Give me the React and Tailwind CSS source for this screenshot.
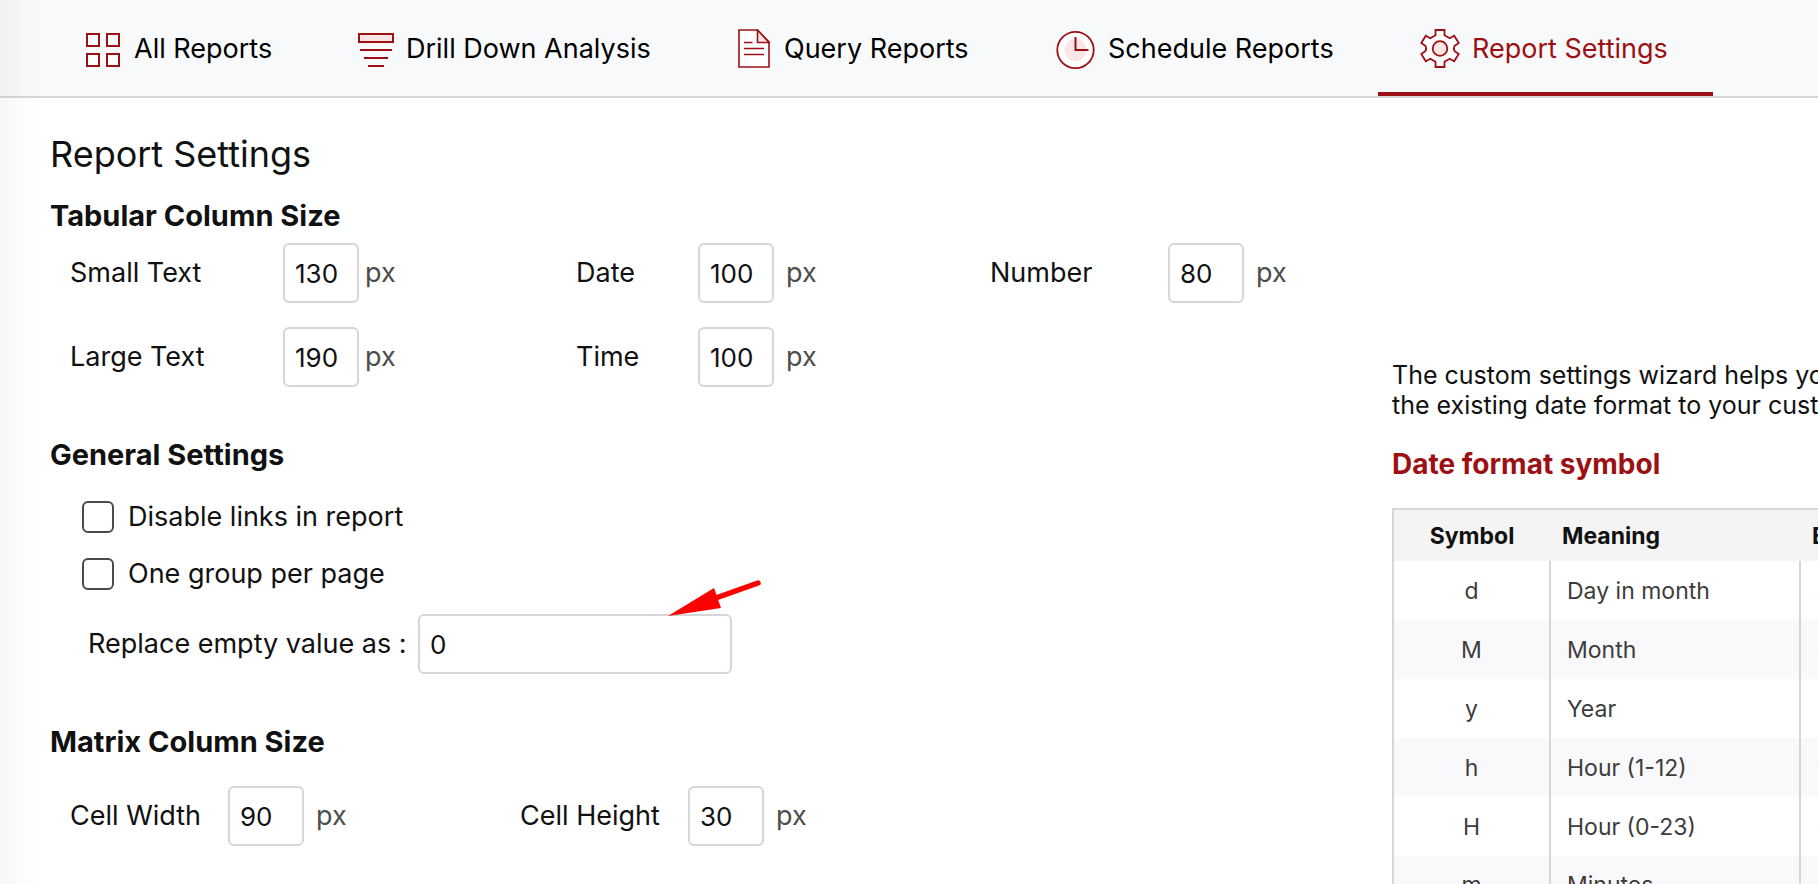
import React from "react";

const GridIcon = () => (
  <svg width="36" height="36" viewBox="0 -2 36 36" fill="#fff" stroke="#9c1014" strokeWidth="2" aria-hidden="true">
    <rect x="1" y="1" width="12" height="12" />
    <rect x="21" y="1" width="12" height="12" />
    <rect x="1" y="21" width="12" height="12" />
    <rect x="21" y="21" width="12" height="12" />
  </svg>
);

const FunnelIcon = () => (
  <svg width="36" height="36" viewBox="0 -2 36 36" fill="none" stroke="#9c1014" strokeWidth="2" aria-hidden="true">
    <rect x="1" y="1" width="34" height="8" fill="#fbe6e6" />
    <path d="M2 17h32M6 25h24M10 33h16" />
  </svg>
);

const DocumentIcon = () => (
  <svg width="34" height="40" viewBox="0 1 34 40" fill="none" stroke="#9c1014" strokeWidth="1.6" aria-hidden="true">
    <path d="M1 2H19.5L31 14V39H1Z" fill="#fff" />
    <path d="M19.5 2V14.5H31Z" fill="#fbe6e6" />
    <path d="M6 14.5h8.500M6 20.500h20M6 26.500h20" />
  </svg>
);

const ClockIcon = () => (
  <svg width="40" height="42" viewBox="0 -2 40 42" fill="none" stroke="#9c1014" aria-hidden="true">
    <circle cx="19.500" cy="20" r="18.200" fill="#fff" strokeWidth="1.800" />
    <circle cx="19.500" cy="20" r="11" fill="#fbe6e6" stroke="none" />
    <path d="M19.500 7V20H32.500" strokeWidth="2" />
  </svg>
);

const GearIcon = () => (
  <svg width="40" height="40" viewBox="0 1 40 40" fill="none" stroke="#9c1014" strokeWidth="1.800" aria-hidden="true">
    <path
      d="M15.500 2h9v5.300l5.200 3 4.500-2.600 4.500 7.300-4.300 3q-1 2.500 0 5l4.300 3-4.500 7.300-4.500-2.600-5.200 3v5.300h-9v-5.300l-5.200-3-4.500 2.600L1.300 26l4.300-3q1-2.500 0-5L1.300 15l4.500-7.300 4.500 2.600 5.200-3Z"
      fill="#fff"
    />
    <circle cx="20" cy="20.500" r="7.300" fill="#fbe6e6" />
  </svg>
);

const tabs = [
  { label: "All Reports", Icon: GridIcon },
  { label: "Drill Down Analysis", Icon: FunnelIcon },
  { label: "Query Reports", Icon: DocumentIcon },
  { label: "Schedule Reports", Icon: ClockIcon },
  { label: "Report Settings", Icon: GearIcon, active: true },
];

const symbols = [
  ["d", "Day in month", "4"],
  ["M", "Month", "07"],
  ["y", "Year", "2005"],
  ["h", "Hour (1-12)", "12"],
  ["H", "Hour (0-23)", "0"],
  ["m", "Minutes", "30"],
];

function SizeField({ id, label, value, labelClass, gapClass = "gap-3" }) {
  return (
    <div className="flex items-center">
      <label htmlFor={id} className={labelClass}>{label}</label>
      <div className={"flex items-center " + gapClass}>
        <input
          id={id}
          type="text"
          defaultValue={value}
          className="h-[60px] w-[76px] rounded-md border-2 border-[#d6d6d6] bg-white px-2.5 text-[26px]"
        />
        <span className="text-[#4d4d4d]">px</span>
      </div>
    </div>
  );
}

export default function App() {
  return (
    <div className="relative h-screen overflow-hidden bg-white font-['Inter',sans-serif] text-[27px] leading-9 text-[#111]">
      <header className="border-b-2 border-[#d6d6d6] bg-[#f8f9fb]">
        <nav className="grid h-24 grid-cols-[272px_380px_318px_364px_335px] pl-11">
          {tabs.map(({ label, Icon, active }) => (
            <a
              key={label}
              href="#"
              className={
                active
                  ? "flex items-center gap-3 border-b-4 border-[#9c1014] pl-[42px] pt-1.5 whitespace-nowrap text-[#9c1014]"
                  : "flex items-center gap-3 border-b-4 border-transparent pl-[42px] pt-1.5 whitespace-nowrap text-black"
              }
            >
              <Icon />
              <span>{label}</span>
            </a>
          ))}
        </nav>
      </header>

      <main className="grid grid-cols-[minmax(0,1fr)_426px]">
        <section className="pt-9 pl-[50px]">
          <h1 className="text-[36px] leading-10">Report Settings</h1>

          <h2 className="mt-6 text-[29px] font-bold">Tabular Column Size</h2>
          <div className="mt-[9px] grid grid-cols-[506px_414px_auto] gap-y-6 pl-5">
            <SizeField id="small" label="Small Text" value="130" labelClass="w-[213px]" gapClass="gap-1.5" />
            <SizeField id="date" label="Date" value="100" labelClass="w-[122px]" />
            <SizeField id="number" label="Number" value="80" labelClass="w-[178px]" />
            <SizeField id="large" label="Large Text" value="190" labelClass="w-[213px]" gapClass="gap-1.5" />
            <SizeField id="time" label="Time" value="100" labelClass="w-[122px]" />
          </div>

          <h2 className="mt-[50px] text-[29px] font-bold">General Settings</h2>
          <div className="mt-7 flex flex-col items-start gap-[25px] pl-8">
            {["Disable links in report", "One group per page"].map((text) => (
              <label key={text} className="flex h-8 items-center gap-3.5">
                <input type="checkbox" className="size-8 appearance-none rounded-md border-2 border-[#4a4a4a] bg-white" />
                {text}
              </label>
            ))}
          </div>
          <div className="mt-6 flex items-center pl-[38px]">
            <label htmlFor="empty" className="w-[330px]">Replace empty value as :</label>
            <div className="relative">
              <input
                id="empty"
                type="text"
                defaultValue="0"
                className="block h-[60px] w-[314px] rounded-md border-2 border-[#d6d6d6] bg-white px-2.5 text-[26px]"
              />
              <svg className="absolute -top-9 left-[250px]" width="94" height="40" viewBox="0 0 94 40" aria-hidden="true">
                <path d="M90 5L45 21" stroke="#f00" strokeWidth="5.500" strokeLinecap="round" />
                <path d="M0 38L46 10L53 30Z" fill="#f00" />
              </svg>
            </div>
          </div>

          <h2 className="mt-[50px] text-[29px] font-bold">Matrix Column Size</h2>
          <div className="mt-[26px] grid grid-cols-[450px_auto] pl-5">
            <SizeField id="cw" label="Cell Width" value="90" labelClass="w-[158px]" />
            <SizeField id="ch" label="Cell Height" value="30" labelClass="w-[168px]" />
          </div>
        </section>

        <aside className="overflow-hidden pt-[262px] whitespace-nowrap">
          <p className="text-[25px] leading-[30px]">
            The custom settings wizard helps you to change
            <br />
            the existing date format to your custom format.
          </p>
          <h3 className="mt-[26px] text-[28px] font-bold text-[#9c1014]">Date format symbol</h3>
          <table className="mt-[26px] w-[660px] table-fixed border-collapse border-2 border-[#d6d6d6] text-[23px] leading-7">
            <colgroup>
              <col className="w-[157px]" />
              <col className="w-[250px]" />
              <col />
            </colgroup>
            <thead>
              <tr className="h-[52px] bg-[#f4f4f4] text-left">
                <th className="text-center">Symbol</th>
                <th className="pl-3">Meaning</th>
                <th className="pl-3">Example</th>
              </tr>
            </thead>
            <tbody className="text-[#3c3c3c]">
              {symbols.map(([symbol, meaning, example]) => (
                <tr key={symbol} className="h-[59px] even:bg-[#f9f9fb]">
                  <td className="border-x-2 border-[#d6d6d6] text-center">{symbol}</td>
                  <td className="border-x-2 border-[#d6d6d6] pl-4">{meaning}</td>
                  <td className="pl-4">{example}</td>
                </tr>
              ))}
            </tbody>
          </table>
        </aside>
      </main>

      <div className="pointer-events-none absolute inset-y-0 left-0 w-11 bg-linear-to-r from-black/[0.035] via-black/[0.01] to-transparent" />
    </div>
  );
}
